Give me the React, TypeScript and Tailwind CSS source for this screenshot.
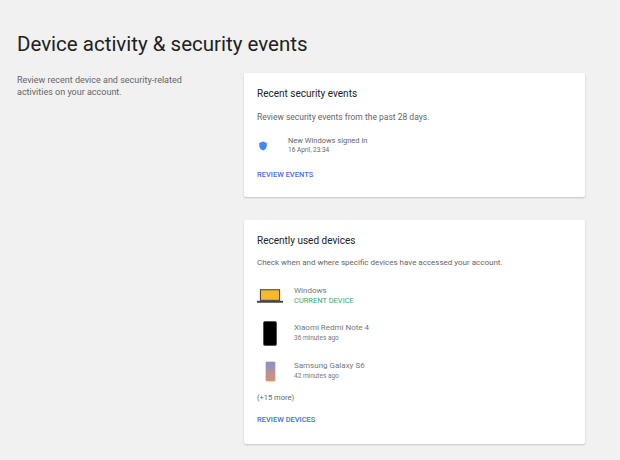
export default function App() {
  const f = { fontFamily: 'Roboto, "Liberation Sans", sans-serif' };
  return (
    <div style={f} className="w-[620px] h-[460px] bg-[#f1f1f1] overflow-hidden">
      <div className="pl-[17px] pt-[31px] text-[20.5px] leading-[26px] text-[#212121]">Device activity &amp; security events</div>
      <div className="flex pt-[16px]">
        <div className="w-[244px] pl-[17px] pt-[1px] text-[9px] leading-[12px] text-[#666]">
          Review recent device and security-related<br />activities on your account.
        </div>
        <div className="w-[341px] flex flex-col gap-[23px]">
          <div className="bg-white rounded-[2px] shadow-[0_1px_2px_rgba(0,0,0,0.2)] h-[124px] px-[13px] pt-[15px]">
            <div className="text-[10px] leading-[12px] text-[#212121]">Recent security events</div>
            <div className="mt-[12px] text-[8.5px] leading-[10px] text-[#666]">Review security events from the past 28 days.</div>
            <div className="mt-[14px] flex items-start">
              <svg width="10" height="10" viewBox="0 0 24 24" className="ml-[1px] mt-[5px]"><path fill="#4285f4" d="M12 1 3 5v6c0 5.5 3.8 10.7 9 12 5.2-1.3 9-6.5 9-12V5z" /></svg>
              <div className="ml-[20px]">
                <div className="text-[7.5px] leading-[10px] text-[#666]">New Windows signed in</div>
                <div className="text-[6.5px] leading-[9px] text-[#666]">16 April, 23:34</div>
              </div>
            </div>
            <div className="mt-[14px] text-[7.5px] font-medium text-[#4a6ee0]">REVIEW EVENTS</div>
          </div>
          <div className="bg-white rounded-[2px] shadow-[0_1px_2px_rgba(0,0,0,0.2)] h-[224px] px-[13px] pt-[15px]">
            <div className="text-[10px] leading-[12px] text-[#212121]">Recently used devices</div>
            <div className="mt-[11px] text-[8px] leading-[10px] text-[#666]">Check when and where specific devices have accessed your account.</div>
            <div className="mt-[17px] flex items-center h-[22px]">
              <div className="w-[26px] flex justify-center">
                <svg width="27" height="16" viewBox="0 0 27 16"><rect x="3" y="1" width="21" height="12" fill="#333" /><rect x="4" y="2" width="19" height="10" fill="#f5b82e" /><rect x="0" y="13" width="27" height="2" fill="#444" /></svg>
              </div>
              <div className="ml-[11px]">
                <div className="text-[8px] leading-[10px] text-[#777]">Windows</div>
                <div className="text-[7.5px] leading-[10px] text-[#3ca56b]">CURRENT DEVICE</div>
              </div>
            </div>
            <div className="mt-[13px] flex items-center h-[26px]">
              <div className="w-[26px] flex justify-center">
                <div className="w-[14px] h-[25px] bg-black rounded-[2px] border border-[#555]" />
              </div>
              <div className="ml-[11px]">
                <div className="text-[8px] leading-[10px] text-[#777]">Xiaomi Redmi Note 4</div>
                <div className="text-[6.5px] leading-[10px] text-[#777]">36 minutes ago</div>
              </div>
            </div>
            <div className="mt-[13px] flex items-center h-[24px]">
              <div className="w-[26px] flex justify-center">
                <div className="w-[11px] h-[21px] bg-[#e8dcc8] rounded-[2px] p-[1px]"><div className="w-full h-full bg-gradient-to-b from-[#8a8fc8] to-[#d89070] rounded-[1px]" /></div>
              </div>
              <div className="ml-[11px]">
                <div className="text-[8px] leading-[10px] text-[#777]">Samsung Galaxy S6</div>
                <div className="text-[6.5px] leading-[10px] text-[#777]">42 minutes ago</div>
              </div>
            </div>
            <div className="mt-[9px] text-[7.5px] text-[#666]">(+15 more)</div>
            <div className="mt-[11px] text-[7.5px] font-medium text-[#4a6ee0]">REVIEW DEVICES</div>
          </div>
        </div>
      </div>
    </div>
  );
}
